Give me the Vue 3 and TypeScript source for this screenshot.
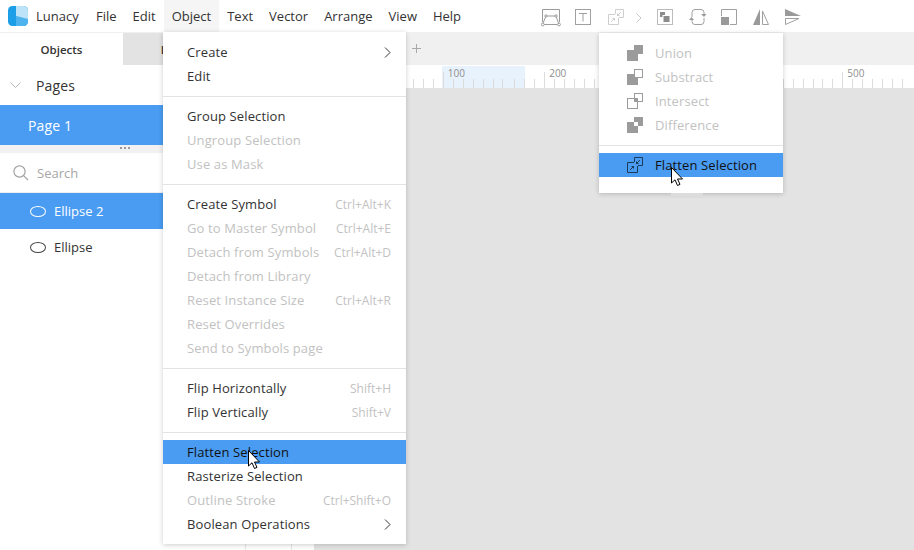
<script setup lang="ts">
interface MenuEntry {
  label?: string;
  shortcut?: string;
  disabled?: boolean;
  active?: boolean;
  submenu?: boolean;
  separator?: boolean;
}

interface SubEntry {
  label: string;
  icon: 'union' | 'subtract' | 'intersect' | 'difference';
}

const menuBar = ['File', 'Edit', 'Object', 'Text', 'Vector', 'Arrange', 'View', 'Help'];

const objectMenu: MenuEntry[] = [
  { label: 'Create', submenu: true },
  { label: 'Edit' },
  { separator: true },
  { label: 'Group Selection' },
  { label: 'Ungroup Selection', disabled: true },
  { label: 'Use as Mask', disabled: true },
  { separator: true },
  { label: 'Create Symbol', shortcut: 'Ctrl+Alt+K' },
  { label: 'Go to Master Symbol', shortcut: 'Ctrl+Alt+E', disabled: true },
  { label: 'Detach from Symbols', shortcut: 'Ctrl+Alt+D', disabled: true },
  { label: 'Detach from Library', disabled: true },
  { label: 'Reset Instance Size', shortcut: 'Ctrl+Alt+R', disabled: true },
  { label: 'Reset Overrides', disabled: true },
  { label: 'Send to Symbols page', disabled: true },
  { separator: true },
  { label: 'Flip Horizontally', shortcut: 'Shift+H' },
  { label: 'Flip Vertically', shortcut: 'Shift+V' },
  { separator: true },
  { label: 'Flatten Selection', active: true },
  { label: 'Rasterize Selection' },
  { label: 'Outline Stroke', shortcut: 'Ctrl+Shift+O', disabled: true },
  { label: 'Boolean Operations', submenu: true },
];

const booleanOps: SubEntry[] = [
  { label: 'Union', icon: 'union' },
  { label: 'Substract', icon: 'subtract' },
  { label: 'Intersect', icon: 'intersect' },
  { label: 'Difference', icon: 'difference' },
];

// ruler is drawn in two runs, the second one sits 2px further right
const firstTicks = Array.from({ length: 10 }, (_, i) => i);
const secondTicks = Array.from({ length: 40 }, (_, i) => i);
const labelFor: Record<number, string> = { 3: '200', 33: '500' };
</script>

<template>
  <div class="app">
    <header class="topbar">
      <svg class="logo" viewBox="0 0 20 20">
        <rect width="20" height="20" rx="4.5" fill="#1d9fe8" />
        <path d="M8 10L20 13V15.5A4.5 4.5 0 0 1 15.5 20H8Z" fill="#4fb4ee" />
        <path d="M8 0H15.5A4.5 4.5 0 0 1 20 4.5V13L8 10Z" fill="#bde3f8" />
      </svg>
      <span class="brand">Lunacy</span>
      <nav class="menubar">
        <span v-for="item in menuBar" :key="item" class="menubar__item" :class="{ 'menubar__item--open': item === 'Object' }">{{ item }}</span>
      </nav>
      <div class="tools">
        <svg class="tool tool--path" viewBox="0 0 20 18" fill="none" stroke="#9a9a9a">
          <path d="M1.5 13V0.5H18.5V13" />
          <path d="M1.5 15.5L5 7H15L18 15.5H1.5Z" />
          <circle cx="1.8" cy="15.5" r="1.4" fill="#fff" />
          <circle cx="18" cy="15.5" r="1.4" fill="#fff" />
          <circle cx="5" cy="7" r="1.2" fill="#fff" />
          <circle cx="15" cy="7" r="1.2" fill="#fff" />
        </svg>
        <svg class="tool tool--text" viewBox="0 0 16 16" fill="none" stroke="#a0a0a0">
          <rect x="0.5" y="0.5" width="15" height="15" />
          <path d="M4 4.5H12M8 4.5V12.5" />
        </svg>
        <svg class="tool tool--flat" viewBox="0 0 16 16" fill="none" stroke="#cfcfcf">
          <path d="M7 5.5H0.5V15.5H10.5V9" />
          <path d="M7.5 5V0.5H15.5V8.5H11" />
          <path d="M3 13L6.5 9.5" />
          <path d="M7 9V12L4 9Z" fill="#cfcfcf" stroke="none" />
          <path d="M13 3L9.5 6.5" />
          <path d="M9 7V4L12 7Z" fill="#cfcfcf" stroke="none" />
        </svg>
        <svg class="tool tool--chev" viewBox="0 0 6 10" fill="none" stroke="#c8c8c8">
          <path d="M0.5 0.5L5 5L0.5 9.5" />
        </svg>
        <svg class="tool tool--frame" viewBox="0 0 16 16" fill="none">
          <rect x="0.5" y="0.5" width="15" height="15" stroke="#bcbcbc" />
          <rect x="3" y="3" width="5" height="5" fill="#8c8c8c" />
          <rect x="6" y="6.5" width="7" height="7" fill="#8c8c8c" stroke="#fff" />
        </svg>
        <svg class="tool tool--rotate" viewBox="0 0 19 16" fill="none" stroke="#a0a0a0">
          <path d="M4 8V3.5A3 3 0 0 1 7 0.5H13A3 3 0 0 1 16 3.5V5" />
          <path d="M16 9V12.5A3 3 0 0 1 13 15.5H7A3 3 0 0 1 4 12.5V11" />
          <path d="M1 11L3.5 8L6 11Z" fill="#9a9a9a" stroke="none" />
          <path d="M13 5H18.5L16 8Z" fill="#9a9a9a" stroke="none" />
        </svg>
        <svg class="tool tool--resize" viewBox="0 0 16 16" fill="none">
          <path d="M0.5 7V0.5H15.5V15.5H9" stroke="#a0a0a0" />
          <rect x="0" y="8" width="8" height="8" fill="#9a9a9a" />
        </svg>
        <svg class="tool tool--fliph" viewBox="0 0 16 16" fill="none">
          <path d="M7 0V16H0Z" fill="#9a9a9a" />
          <path d="M9.5 2V15.5H15.5Z" stroke="#a0a0a0" />
        </svg>
        <svg class="tool tool--flipv" viewBox="0 0 16 16" fill="none">
          <path d="M0 0V7H16Z" fill="#9a9a9a" />
          <path d="M0.5 9.5H14L0.5 15.5Z" stroke="#a0a0a0" />
        </svg>
      </div>
    </header>

    <div class="body">
      <aside class="sidebar">
        <div class="tabs">
          <div class="tabs__item tabs__item--active">Objects</div>
          <div class="tabs__item tabs__item--second">Library</div>
        </div>
        <div class="pages-head">
          <svg class="pages-head__chev" viewBox="0 0 11 6" fill="none" stroke="#b8b8b8">
            <path d="M0.5 0.5L5.5 5.5L10.5 0.5" />
          </svg>
          <span>Pages</span>
        </div>
        <div class="page-row">Page 1</div>
        <div class="resizer"><span class="resizer__dots"></span></div>
        <div class="search">
          <svg class="search__icon" viewBox="0 0 16 16" fill="none" stroke="#a3a3a3" stroke-width="1.2">
            <circle cx="6.5" cy="6.5" r="5.6" />
            <path d="M10.6 10.6L15 15" />
          </svg>
          <span>Search</span>
        </div>
        <div class="layer layer--selected">
          <span class="layer__ellipse"></span>
          <span>Ellipse 2</span>
        </div>
        <div class="layer">
          <span class="layer__ellipse"></span>
          <span>Ellipse</span>
        </div>
        <div class="sidebar__foot">
          <span class="sidebar__foot-col"></span>
          <span class="sidebar__foot-col sidebar__foot-col--narrow"></span>
        </div>
      </aside>

      <main class="workspace">
        <div class="doc-tabs">
          <svg class="doc-tabs__plus" viewBox="0 0 9 9" fill="none" stroke="#a8a8a8">
            <path d="M4.5 0V9M0 4.5H9" />
          </svg>
        </div>
        <div class="ruler">
          <div class="ruler__highlight"></div>
          <div class="ruler__run">
            <span v-for="i in firstTicks" :key="i" class="tick" :class="{ 'tick--major': i === 3 }">
              <span v-if="i === 3" class="tick__label">100</span>
            </span>
          </div>
          <div class="ruler__run ruler__run--second">
            <span v-for="i in secondTicks" :key="i" class="tick" :class="{ 'tick--major': i % 10 === 3 }">
              <span v-if="labelFor[i]" class="tick__label">{{ labelFor[i] }}</span>
            </span>
          </div>
        </div>
        <div class="canvas"></div>
      </main>
    </div>

    <div class="menu menu--object">
      <template v-for="(entry, i) in objectMenu" :key="i">
        <div v-if="entry.separator" class="menu__sep"></div>
        <div
          v-else
          class="menu__row"
          :class="{ 'menu__row--disabled': entry.disabled, 'menu__row--active': entry.active }"
        >
          <span>{{ entry.label }}</span>
          <span v-if="entry.shortcut" class="menu__shortcut">{{ entry.shortcut }}</span>
          <svg v-if="entry.submenu" class="menu__arrow" viewBox="0 0 7 11" fill="none" stroke="#333">
            <path d="M1 0.5L6 5.5L1 10.5" />
          </svg>
        </div>
      </template>
    </div>

    <div class="menu menu--boolean">
      <div v-for="op in booleanOps" :key="op.label" class="sub-row">
        <svg class="sub-row__icon" viewBox="0 0 16 16">
          <template v-if="op.icon === 'union'">
            <path d="M0 5H7V0H16V9H11V16H0Z" fill="#9b9b9b" />
          </template>
          <template v-else-if="op.icon === 'subtract'">
            <path d="M0 5H7V9H11V16H0Z" fill="#9b9b9b" />
            <rect x="7.5" y="0.5" width="8" height="8" fill="#fff" stroke="#9b9b9b" />
          </template>
          <template v-else-if="op.icon === 'intersect'">
            <rect x="0.5" y="5.5" width="10" height="10" fill="#fff" stroke="#9b9b9b" />
            <rect x="7.5" y="0.5" width="8" height="8" fill="none" stroke="#9b9b9b" />
            <rect x="7" y="5" width="4" height="4" fill="#9b9b9b" />
          </template>
          <template v-else>
            <path d="M0 5H7V9H11V16H0Z" fill="#9b9b9b" />
            <path d="M7 0H16V9H11V5H7Z" fill="#9b9b9b" />
          </template>
        </svg>
        <span>{{ op.label }}</span>
      </div>
      <div class="menu__sep"></div>
      <div class="sub-row sub-row--active">
        <svg class="sub-row__icon" viewBox="0 0 16 16" fill="none" stroke="#1c3a5a">
          <path d="M7 5.5H0.5V15.5H10.5V9" />
          <path d="M7.5 5V0.5H15.5V8.5H11" />
          <path d="M3 13L6.5 9.5" />
          <path d="M7 9V12L4 9Z" fill="#1c3a5a" stroke="none" />
          <path d="M13 3L9.5 6.5" />
          <path d="M9 7V4L12 7Z" fill="#1c3a5a" stroke="none" />
        </svg>
        <span>Flatten Selection</span>
      </div>
    </div>
    <div class="menu-peek"></div>

    <svg class="cursor cursor--main" viewBox="0 0 13 20">
      <path d="M0.5 0.5V16L4 12.8L6.5 18.5L9 17.4L6.5 12H11.5Z" fill="#fff" stroke="#000" stroke-width="1" />
    </svg>
    <svg class="cursor cursor--sub" viewBox="0 0 13 20">
      <path d="M0.5 0.5V16L4 12.8L6.5 18.5L9 17.4L6.5 12H11.5Z" fill="#fff" stroke="#000" stroke-width="1" />
    </svg>
  </div>
</template>

<style>
html,
body {
  margin: 0;
  overflow: hidden;
}
</style>

<style scoped>
.app {
  position: relative;
  width: 914px;
  height: 550px;
  overflow: hidden;
  display: flex;
  flex-direction: column;
  background: #fff;
  color: #333;
  font-family: "Open Sans", "Noto Sans", sans-serif;
  font-size: 13px;
}

.topbar {
  display: flex;
  align-items: center;
  height: 32px;
  flex-shrink: 0;
  padding-left: 8px;
  box-sizing: border-box;
}

.logo {
  width: 20px;
  height: 20px;
  flex-shrink: 0;
}

.brand {
  margin-left: 8px;
  width: 52px;
}

.menubar {
  display: flex;
  align-self: stretch;
}

.menubar__item {
  display: flex;
  align-items: center;
  padding: 0 8px;
}

.menubar__item--open {
  background: #f5f5f5;
}

.tools {
  display: flex;
  align-items: flex-start;
  align-self: flex-start;
  margin: 9px 0 0 72px;
}

.tool {
  display: block;
  flex-shrink: 0;
  width: 16px;
  height: 16px;
  margin-right: 16px;
}

.tool--path {
  width: 20px;
  height: 18px;
  margin-right: 14px;
}

.tool--text {
  margin-right: 17px;
}

.tool--flat {
  margin-right: 12px;
}

.tool--chev {
  width: 6px;
  height: 10px;
  margin: 4px 15px 0 0;
}

.tool--frame {
  margin-right: 15px;
}

.tool--rotate {
  width: 19px;
  margin-right: 14px;
}

.body {
  flex: 1;
  display: flex;
  min-height: 0;
}

.sidebar {
  position: relative;
  width: 314px;
  flex-shrink: 0;
  display: flex;
  flex-direction: column;
  background: #fff;
}

.tabs {
  display: flex;
  height: 33px;
  background: #e3e3e3;
  box-sizing: border-box;
  border-top: 1px solid #f0f0f0;
}

.tabs__item {
  width: 123px;
  display: flex;
  align-items: center;
  justify-content: center;
  font-size: 11.5px;
  font-weight: 600;
}

.tabs__item--second {
  padding-right: 8px;
  box-sizing: border-box;
}

.tabs__item--active {
  background: #fff;
}

.pages-head {
  display: flex;
  align-items: center;
  height: 40px;
  padding-left: 10px;
  font-size: 14px;
  letter-spacing: 0.15px;
}

.pages-head__chev {
  width: 11px;
  height: 6px;
  margin-right: 15px;
}

.page-row {
  display: flex;
  align-items: center;
  height: 40px;
  padding-left: 28px;
  background: #4a9cf2;
  color: #fff;
  font-size: 14px;
  letter-spacing: 0.15px;
}

.resizer {
  position: relative;
  height: 8px;
  background: #f1f1f1;
}

.resizer__dots {
  position: absolute;
  left: 120px;
  top: 2px;
  width: 10px;
  height: 2px;
  background: repeating-linear-gradient(90deg, #999 0 2px, transparent 2px 4px);
}

.search {
  display: flex;
  align-items: center;
  height: 39px;
  padding-left: 13px;
  color: #a6a6a6;
  border-bottom: 1px solid #eeeeee;
  box-sizing: content-box;
}

.search__icon {
  width: 16px;
  height: 16px;
  margin-right: 8px;
}

.layer {
  display: flex;
  align-items: center;
  height: 36px;
  padding-left: 30px;
}

.layer__ellipse {
  width: 14px;
  height: 9px;
  margin-right: 8px;
  border: 1px solid #444;
  border-radius: 50%;
}

.layer--selected {
  background: #4a9cf2;
  color: #fff;
}

.layer--selected .layer__ellipse {
  border-color: #fff;
}

.sidebar__foot {
  position: absolute;
  left: 0;
  right: 0;
  bottom: 0;
  height: 6px;
}

.sidebar__foot-col {
  position: absolute;
  left: 245px;
  top: 0;
  bottom: 0;
  width: 1px;
  background: #e6e6e6;
}

.sidebar__foot-col--narrow {
  left: 291px;
}

.workspace {
  flex: 1;
  display: flex;
  flex-direction: column;
  min-width: 0;
}

.doc-tabs {
  display: flex;
  align-items: center;
  height: 33px;
  padding-left: 98px;
  background: #f0f0f0;
}

.doc-tabs__plus {
  width: 9px;
  height: 9px;
}

.ruler {
  position: relative;
  display: flex;
  height: 23px;
  flex-shrink: 0;
  background: #fff;
  overflow: hidden;
}

.ruler__highlight {
  position: absolute;
  left: 128px;
  top: 1px;
  width: 83px;
  height: 22px;
  background: #e8f2fc;
}

.ruler__run {
  position: relative;
  display: flex;
  align-items: flex-end;
  height: 23px;
  margin-left: 99px;
}

.ruler__run--second {
  margin-left: 2px;
}

.tick {
  position: relative;
  flex-shrink: 0;
  width: 1px;
  height: 9px;
  margin-right: 8.94px;
  background: #dcdcdc;
}

.tick--major {
  height: 16px;
}

.tick__label {
  position: absolute;
  left: 5px;
  top: -5px;
  font-size: 10px;
  line-height: 12px;
  color: #8f8f8f;
}

.canvas {
  flex: 1;
  background: #e3e3e3;
}

.menu {
  position: absolute;
  box-sizing: border-box;
  padding: 8px 0;
  background: #fff;
  box-shadow: 0 1px 5px rgba(0, 0, 0, 0.2);
  letter-spacing: 0.12px;
}

.menu--object {
  left: 163px;
  top: 32px;
  width: 243px;
  height: 512px;
}

.menu--boolean {
  left: 599px;
  top: 33px;
  width: 184px;
  height: 160px;
}

.menu-peek {
  position: absolute;
  left: 671px;
  top: 193px;
  width: 32px;
  height: 5px;
  background: #dcdcdc;
}

.menu__row {
  display: flex;
  align-items: center;
  justify-content: space-between;
  height: 24px;
  padding: 0 15px 0 24px;
  color: #333;
}

.menu__row--disabled {
  color: #c2c2c2;
}

.menu__row--active {
  background: #4a9cf2;
  color: #111;
}

.menu__shortcut {
  font-size: 12px;
  letter-spacing: 0;
  color: #c2c2c2;
}

.menu__arrow {
  width: 7px;
  height: 11px;
}

.menu__sep {
  height: 1px;
  margin: 8px 0 7px;
  background: #e3e3e3;
}

.sub-row {
  display: flex;
  align-items: center;
  height: 24px;
  padding-left: 28px;
  color: #c2c2c2;
}

.sub-row__icon {
  width: 16px;
  height: 16px;
  margin-right: 12px;
}

.sub-row--active {
  background: #4a9cf2;
  color: #111;
}

.cursor {
  position: absolute;
  width: 13px;
  height: 20px;
}

.cursor--main {
  left: 248px;
  top: 450px;
}

.cursor--sub {
  left: 671px;
  top: 167px;
}
</style>
